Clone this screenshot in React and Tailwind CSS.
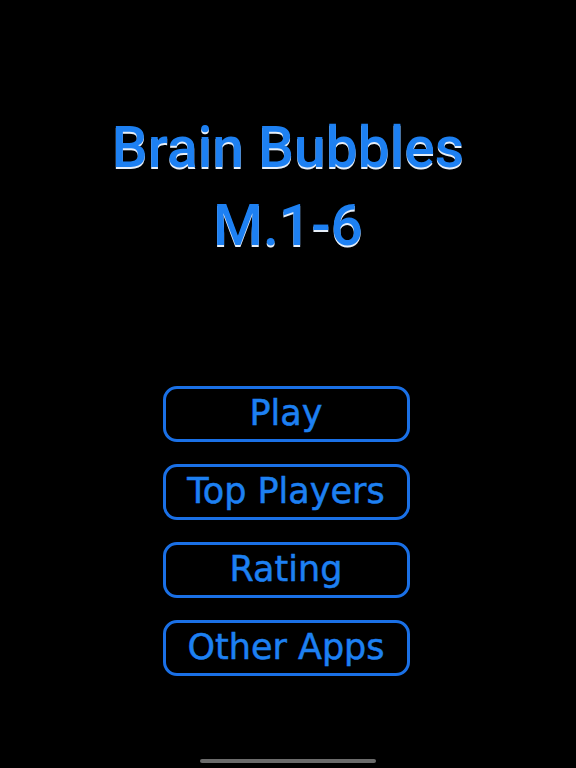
import React from 'react';

const buttons = ['Play', 'Top Players', 'Rating', 'Other Apps'];

const App = () => {
  return (
    <div className="w-[576px] h-[768px] bg-black flex flex-col items-center overflow-hidden">
      <div className="mt-[109px] flex flex-col items-center font-['Roboto',Arial,sans-serif] text-[57px] leading-[78px] font-medium text-[#1d80f2] [text-shadow:0_1.5px_0_#e6eef8]">
        <div>Brain Bubbles</div>
        <div>M.1-6</div>
      </div>
      <div className="mt-[121px] mr-[4px] flex flex-col gap-[22px] font-['DejaVu_Sans',Verdana,sans-serif]">
        {buttons.map((label) => (
          <button
            key={label}
            className="w-[247px] h-[56px] border-[3px] border-[#1a70e6] rounded-[14px] flex items-center justify-center text-[35px] text-[#1d80f2] leading-none pb-[2px] [-webkit-text-stroke:0.5px_#1d80f2]"
          >
            {label}
          </button>
        ))}
      </div>
      <div className="mt-auto mb-[5px] w-[176px] h-[4px] rounded-full bg-[#6b6b6b]" />
    </div>
  );
};

export default App;
